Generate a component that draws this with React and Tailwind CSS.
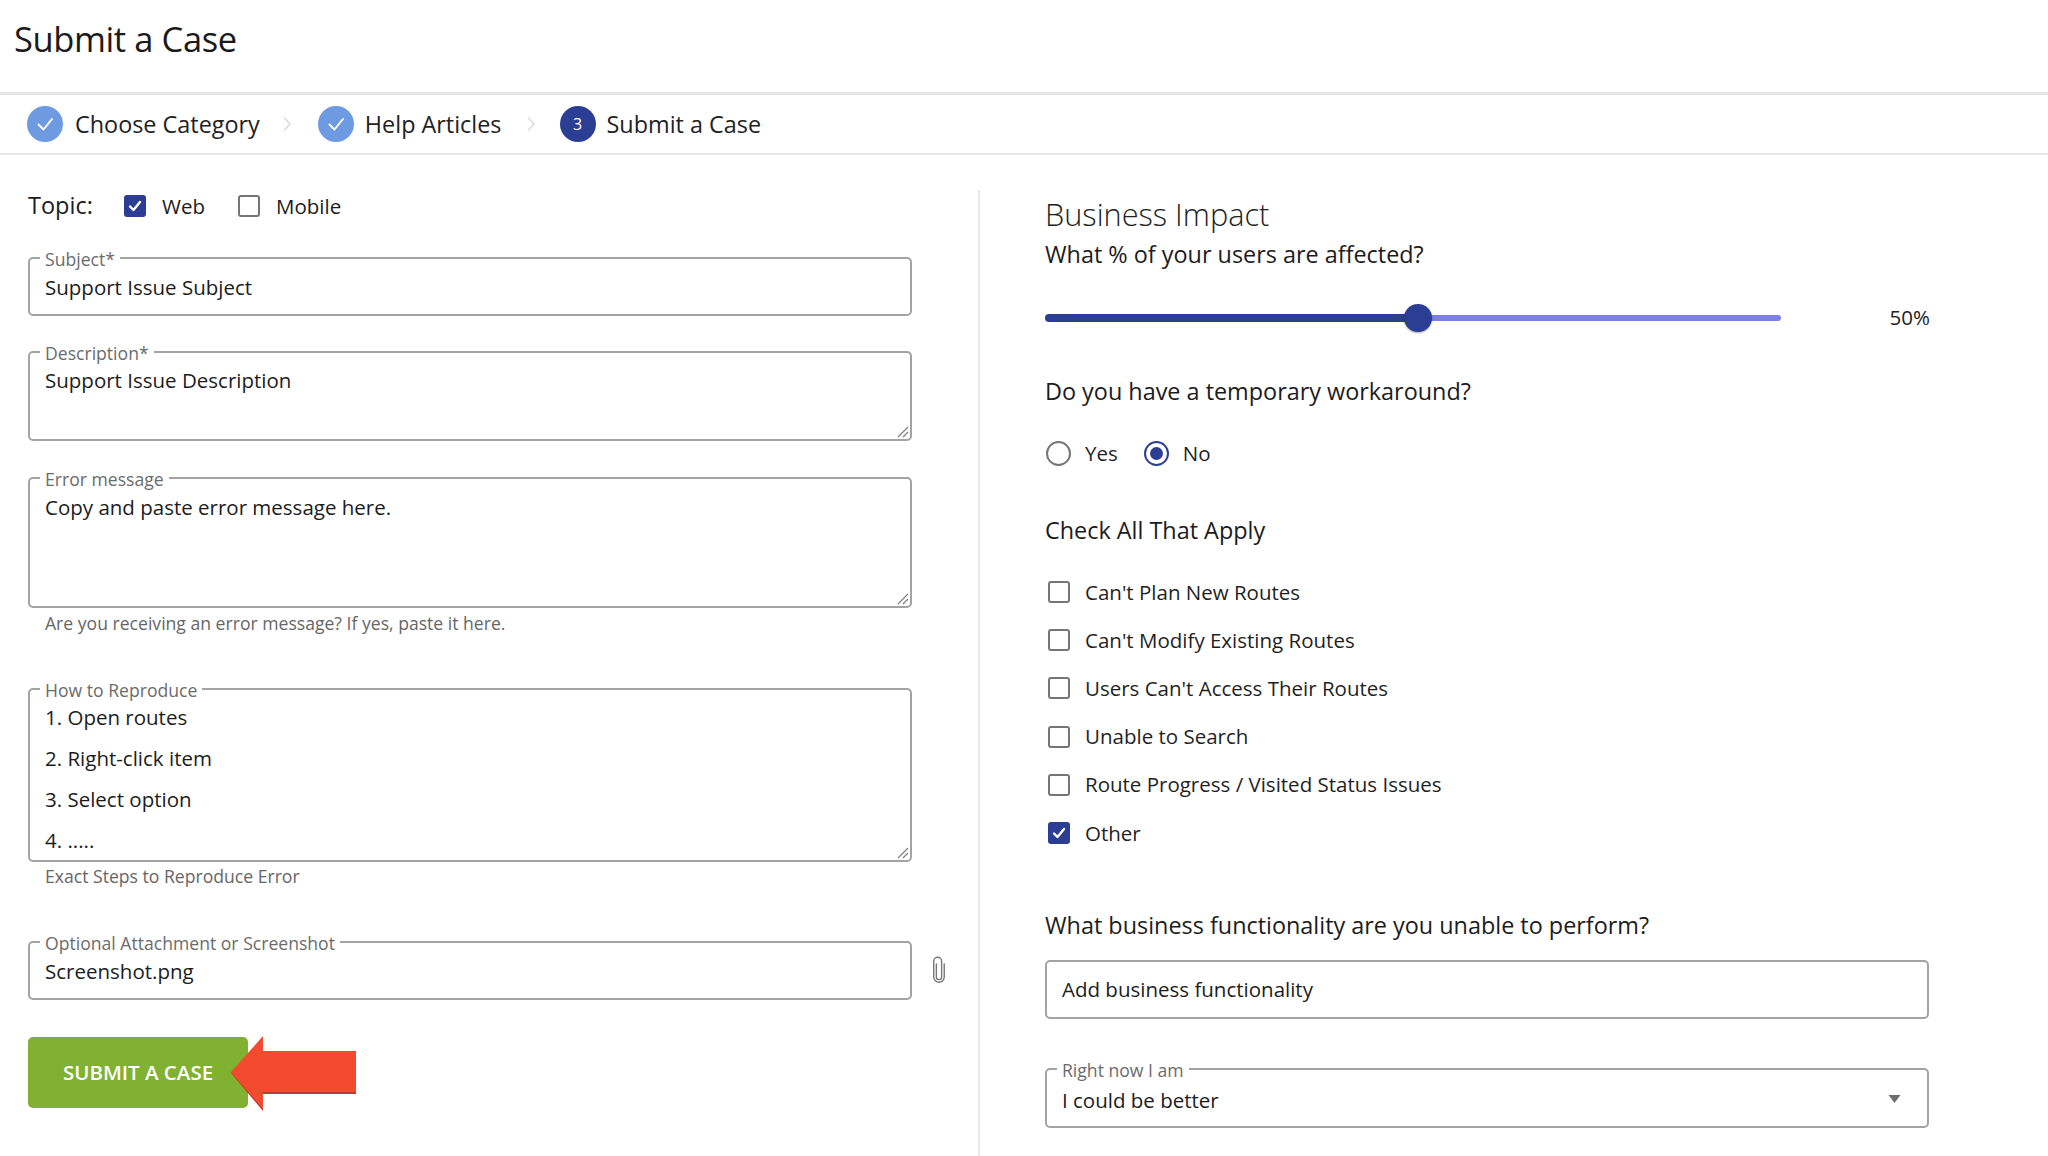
import React from "react";

const Check = ({ className = "w-[16px] h-[16px]", sw = 2.4 }) => (
  <svg viewBox="0 0 16 16" className={className} fill="none" stroke="white" strokeWidth={sw} strokeLinecap="round" strokeLinejoin="round">
    <path d="M3 8.5 L6.5 12 L13 4" />
  </svg>
);

const Box = ({ checked }) =>
  checked ? (
    <span className="flex items-center justify-center w-[22px] h-[22px] rounded-[3px] bg-[#2c3e94] shrink-0"><Check /></span>
  ) : (
    <span className="block w-[22px] h-[22px] rounded-[3px] border-[2px] border-[#757575] bg-white shrink-0" />
  );

const StepCheck = () => (
  <span className="flex items-center justify-center w-[36px] h-[36px] rounded-full bg-[#6d9ae0] shrink-0">
    <svg viewBox="0 0 24 24" className="w-[24px] h-[24px]" fill="none" stroke="white" strokeWidth="1.9" strokeLinecap="round" strokeLinejoin="round"><path d="M5.5 12.5 L10.5 17.5 L19 7" /></svg>
  </span>
);

const Chevron = ({ className }) => (
  <svg viewBox="0 0 10 16" className={`w-[10px] h-[16px] ${className}`} fill="none" stroke="#dcdcdc" strokeWidth="1.6"><path d="M2 1.5 L8 8 L2 14.5" /></svg>
);

const Grip = () => (
  <svg viewBox="0 0 12 12" className="absolute right-[1px] bottom-[1px] w-[12px] h-[12px]" fill="none" stroke="#808080" strokeWidth="1.2"><path d="M1 11 L11 1 M6 11 L11 6" /></svg>
);

const Field = ({ label, className = "", height, children, grip }) => (
  <fieldset className={`relative block border-[2px] border-[#a3a3a3] rounded-[5px] px-[15px] m-0 min-w-0 ${className}`} style={{ height }}>
    <legend className="text-[17.6px] leading-[20px] text-[#6b6b6b] -ml-[5px] pl-[5px] pr-[5px] pt-[2px]">{label}</legend>
    <div className="text-[20.5px] text-[#1c1c1c]">{children}</div>
    {grip && <Grip />}
  </fieldset>
);

const Row = ({ children, checked }) => (
  <label className="flex items-center h-[48.2px] pl-[3px]">
    <Box checked={checked} />
    <span className="ml-[15px] text-[20.5px] text-[#1f1f1f]">{children}</span>
  </label>
);

const Radio = ({ on, children, className = "" }) => (
  <label className={`flex items-center ${className}`}>
    {on ? (
      <span className="flex items-center justify-center w-[25px] h-[25px] rounded-full border-[2px] border-[#2c3e94]"><span className="block w-[13px] h-[13px] rounded-full bg-[#2c3e94]" /></span>
    ) : (
      <span className="block w-[25px] h-[25px] rounded-full border-[2px] border-[#757575]" />
    )}
    <span className="ml-[14px] text-[20.5px] text-[#1f1f1f]">{children}</span>
  </label>
);

export default function App() {
  return (
    <div className="w-[2048px] h-[1156px] overflow-hidden bg-white text-[#1c1c1c]" style={{ fontFamily: '"Open Sans", sans-serif' }}>
      <header className="h-[95px] border-b-[3px] border-[#e4e4e4] pl-[14px] pb-[14px] flex items-center">
        <h1 className="text-[34.5px] font-normal tracking-[-0.4px] text-[#1a1a1a]">Submit a Case</h1>
      </header>
      <nav className="h-[60px] border-b-[2px] border-[#e8e8e8] flex items-center text-[23.4px] text-[#222]">
        <div className="ml-[27px]"><StepCheck /></div>
        <span className="ml-[12px] mt-[2px]">Choose Category</span>
        <Chevron className="ml-[22px]" />
        <div className="ml-[26px]"><StepCheck /></div>
        <span className="ml-[11px] mt-[2px]">Help Articles</span>
        <Chevron className="ml-[24px]" />
        <span className="ml-[24px] flex items-center justify-center w-[36px] h-[36px] rounded-full bg-[#2c3e94] text-white text-[16px]">3</span>
        <span className="ml-[11px] mt-[2px]">Submit a Case</span>
      </nav>
      <main className="flex h-[1001px]">
        <section className="w-[980px] mt-[35px] border-r-[2px] border-[#e8e8e8] pl-[28px] pr-[66px] shrink-0">
          <div className="flex items-center h-[30px]">
            <span className="text-[23.5px] w-[96px] mt-[2px]">Topic:</span>
            <span className="flex items-center mt-[2px]">
              <Box checked />
              <span className="ml-[16px] text-[20.5px]">Web</span>
              <span className="ml-[33px]"><Box /></span>
              <span className="ml-[16px] text-[20.5px]">Mobile</span>
            </span>
          </div>
          <Field label="Subject*" className="mt-[27px]" height="69px"><div className="leading-[28px] mt-[4px]">Support Issue Subject</div></Field>
          <Field label="Description*" className="mt-[25px]" height="100px" grip><div className="leading-[28px] mt-[3px]">Support Issue Description</div></Field>
          <Field label="Error message" className="mt-[26px]" height="141px" grip><div className="leading-[28px] mt-[4px]">Copy and paste error message here.</div></Field>
          <p className="ml-[17px] mt-[3px] text-[17.6px] leading-[24px] text-[#666]">Are you receiving an error message? If yes, paste it here.</p>
          <Field label="How to Reproduce" className="mt-[43px]" height="184px" grip>
            <div className="leading-[41px] -mt-[3px]">
              <div>1. Open routes</div>
              <div>2. Right-click item</div>
              <div>3. Select option</div>
              <div>4. .....</div>
            </div>
          </Field>
          <p className="ml-[17px] mt-[2px] text-[17.6px] leading-[24px] text-[#666]">Exact Steps to Reproduce Error</p>
          <div className="relative mt-[43px]">
            <Field label="Optional Attachment or Screenshot" height="69px"><div className="leading-[28px] mt-[4px]">Screenshot.png</div></Field>
            <svg viewBox="0 0 16 32" className="absolute left-[903px] top-[25px] w-[16px] h-[28px]" fill="none" stroke="#777" strokeWidth="1.6" strokeLinecap="round">
              <path d="M5 9 V24 a3 3 0 0 0 6 0 V6 a4.5 4.5 0 0 0 -9 0 V24 a6 6 0 0 0 12 0 V9" />
            </svg>
          </div>
          <div className="relative mt-[37px] w-[220px] h-[71px]">
            <button className="w-full h-full rounded-[5px] bg-[#80b131] text-white text-[20.5px] font-semibold">SUBMIT A CASE</button>
            <svg viewBox="0 0 126 76" className="absolute left-[203px] -top-[1px] w-[126px] h-[76px]">
              <path d="M32 2 L0 37 L32 75 L32 58 L125 58 L125 17 L32 17 Z" fill="#c13a26" />
              <path d="M32 0 L0 36 L32 73 L32 56 L125 56 L125 15 L32 15 Z" fill="#f44a30" />
            </svg>
          </div>
        </section>
        <section className="pl-[65px] w-[950px]">
          <h2 className="mt-[40px] text-[30.7px] leading-[38px] font-light text-[#222]">Business Impact</h2>
          <p className="mt-[2px] text-[23.4px] leading-[38px]">What % of your users are affected?</p>
          <div className="mt-[25px] flex items-center h-[40px]">
            <div className="relative w-[736px] h-[8px]">
              <div className="absolute left-0 top-0 w-[373px] h-[8px] rounded-full bg-[#2c3e94]" />
              <div className="absolute left-[373px] right-0 top-[1px] h-[6px] rounded-r-full bg-[#7b80e2]" />
              <div className="absolute left-[359px] -top-[10px] w-[28px] h-[28px] rounded-full bg-[#2c3e94] shadow-[0_1px_2px_rgba(0,0,0,0.35)]" />
            </div>
            <span className="ml-auto text-[20.5px] text-[#222] -mt-[2px]">50%</span>
          </div>
          <p className="mt-[34px] text-[23.4px] leading-[38px]">Do you have a temporary workaround?</p>
          <div className="flex items-center mt-[26px] h-[34px] pl-[1px]">
            <Radio>Yes</Radio>
            <Radio on className="ml-[26px]">No</Radio>
          </div>
          <p className="mt-[41px] text-[23.4px] leading-[38px]">Check All That Apply</p>
          <div className="mt-[19px]">
            <Row>Can't Plan New Routes</Row>
            <Row>Can't Modify Existing Routes</Row>
            <Row>Users Can't Access Their Routes</Row>
            <Row>Unable to Search</Row>
            <Row>Route Progress / Visited Status Issues</Row>
            <Row checked>Other</Row>
          </div>
          <p className="mt-[49px] text-[23.4px] leading-[38px]">What business functionality are you unable to perform?</p>
          <div className="mt-[16px] h-[59px] w-[884px] border-[2px] border-[#a3a3a3] rounded-[5px] flex items-center px-[15px] text-[20.5px]">Add business functionality</div>
          <Field label="Right now I am" className="mt-[39px] w-[884px]" height="70px">
            <div className="flex items-center justify-between leading-[28px] mt-[6px]">
              <span>I could be better</span>
              <svg viewBox="0 0 12 8" className="w-[13px] h-[8px] mr-[11px] -mt-[2px]"><path d="M0 0 H12 L6 8 Z" fill="#6e6e6e" /></svg>
            </div>
          </Field>
        </section>
      </main>
    </div>
  );
}
